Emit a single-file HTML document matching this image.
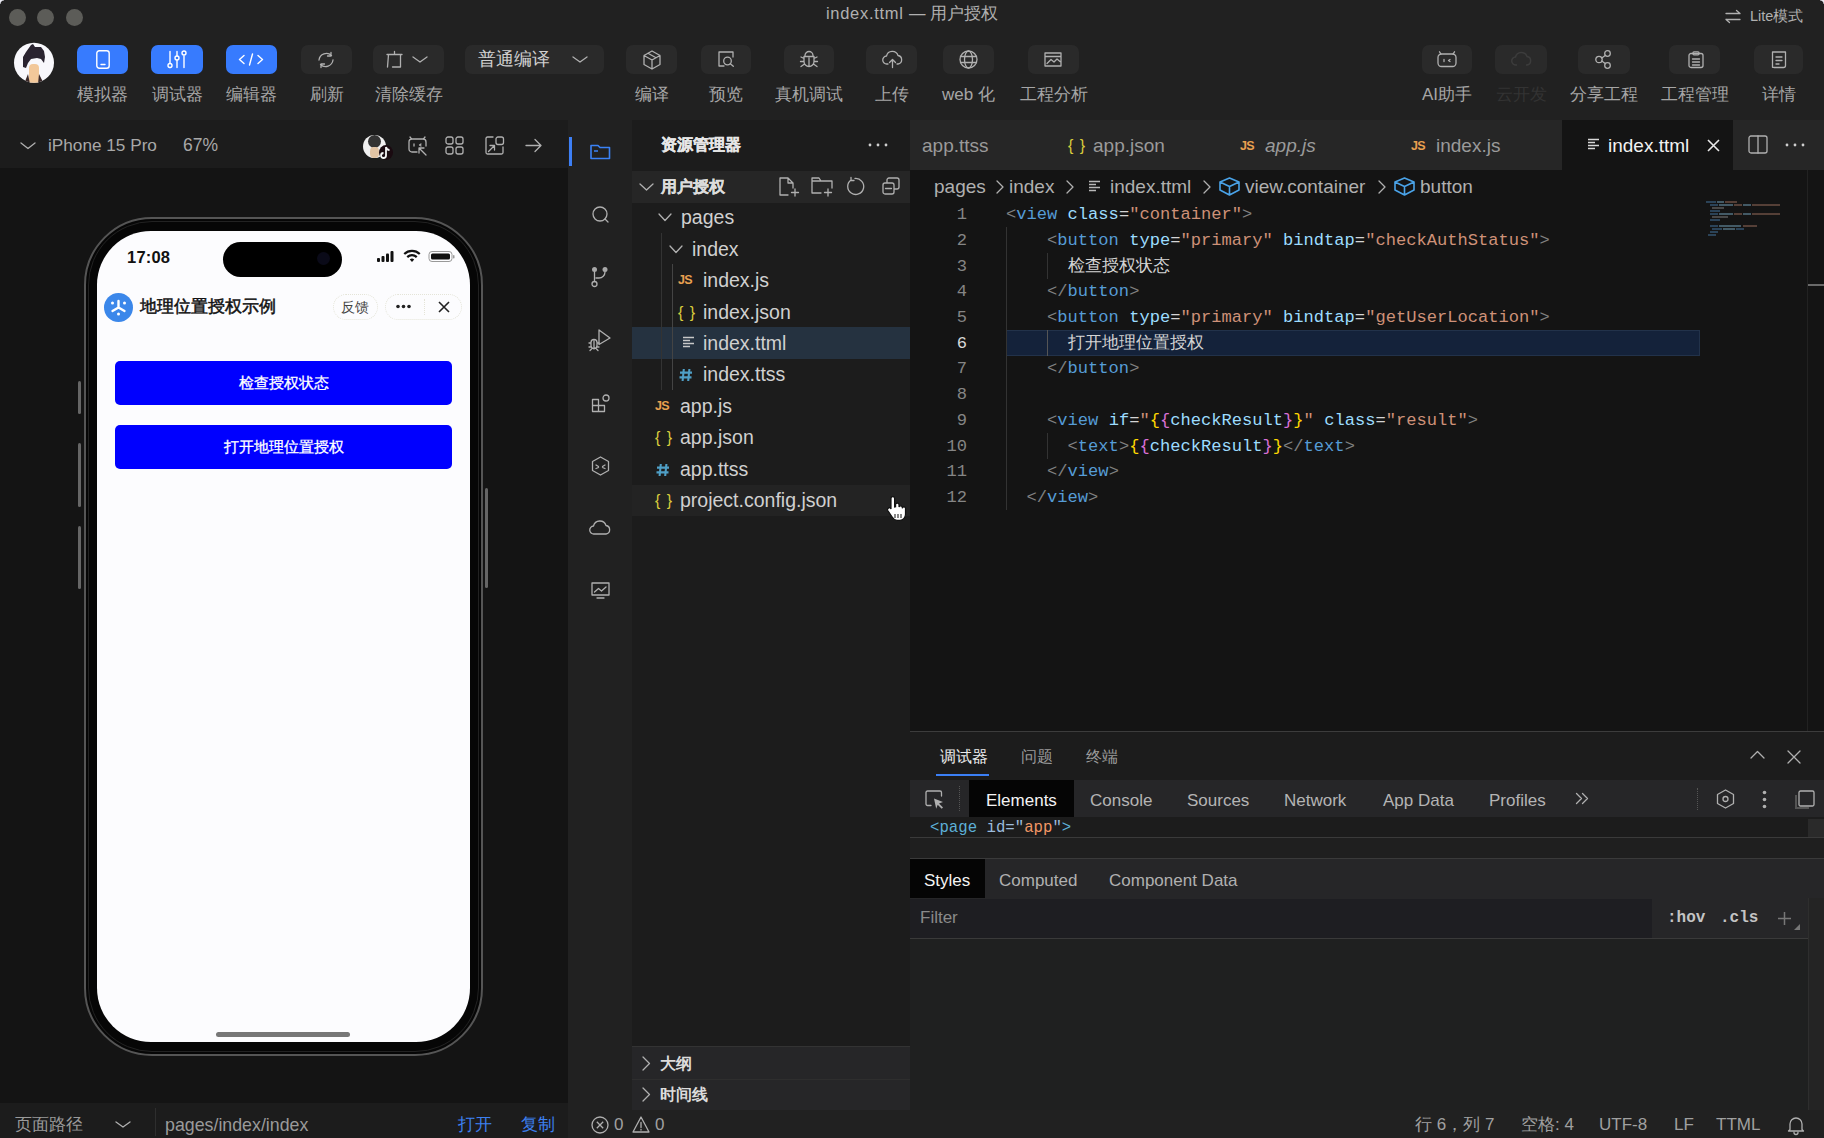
<!DOCTYPE html>
<html><head><meta charset="utf-8">
<style>
*{box-sizing:border-box;margin:0;padding:0}
html,body{width:1824px;height:1138px;overflow:hidden;background:#212121;font-family:"Liberation Sans",sans-serif;color:#c8c8c8}
.a{position:absolute}
svg.i{position:absolute;overflow:visible}
.tb{position:absolute;top:45px;height:29px;border-radius:7px;background:#2a2a2a}
.tbb{background:#377bfe}
.lab{position:absolute;top:84px;font-size:17px;line-height:22px;color:#a6a6a6;white-space:nowrap;text-align:center}
.st{fill:none;stroke:#b0b0b0;stroke-width:1.3;stroke-linecap:round;stroke-linejoin:round}
.sw{fill:none;stroke:#fff;stroke-width:1.4;stroke-linecap:round;stroke-linejoin:round}
.row{position:absolute;height:31.5px;font-size:19.5px;line-height:31.5px;color:#d0d0d0;white-space:nowrap}
.cl{position:absolute;left:1006px;height:26px;line-height:26px;font-size:17.1px;white-space:pre;font-family:"Liberation Mono",monospace;color:#d4d4d4}
.ln{position:absolute;left:910px;width:57px;height:26px;line-height:26px;font-size:17.1px;text-align:right;color:#858585;font-family:"Liberation Mono",monospace}
.g{color:#808080}.t{color:#569cd6}.at{color:#9cdcfe}.s{color:#ce9178}.y{color:#ffd700}.p{color:#da70d6}.w{color:#d4d4d4}
.tab{position:absolute;top:121px;height:50px;line-height:50px;font-size:19px;color:#9a9a9a;white-space:nowrap}
.dt{position:absolute;top:781.5px;height:37px;line-height:37px;font-size:17px;color:#b4b4b4;white-space:nowrap}
.sb{position:absolute;top:1113px;line-height:24px;font-size:17px;color:#a0a0a0;white-space:nowrap}
</style></head><body>

<!-- ===== title bar ===== -->
<div class="a" style="left:9px;top:9px;width:17px;height:17px;border-radius:50%;background:#5c5c58"></div>
<div class="a" style="left:37px;top:9px;width:17px;height:17px;border-radius:50%;background:#5c5c58"></div>
<div class="a" style="left:66px;top:9px;width:17px;height:17px;border-radius:50%;background:#5c5c58"></div>
<div class="a" style="left:826px;top:3px;font-size:16.5px;line-height:20px;color:#b0b0b0;white-space:nowrap"><span style="letter-spacing:0.7px">index.ttml </span>— 用户授权</div>
<svg class="i" style="left:1725px;top:10px" width="16" height="13"><path class="st" d="M1 3.5h14M11.5 0.5l3.5 3M15 9.5H1M4.5 12.5L1 9.5"/></svg>
<div class="a" style="left:1750px;top:7px;font-size:14.5px;line-height:18px;color:#b0b0b0;white-space:nowrap">Lite模式</div>

<!-- ===== toolbar ===== -->
<svg class="i" style="left:0;top:0" width="70" height="90">
 <defs><clipPath id="avc"><circle cx="34" cy="62.7" r="20"/></clipPath></defs>
 <circle cx="34" cy="62.7" r="20" fill="#f8f8fc"/>
 <g clip-path="url(#avc)">
  <path d="M23 67L23 57 26 52 31 45 33 44 35 47 41 47 44 51 45 57 44 63 41 59 37 58 31 59 28 63 26 68z" fill="#2a2430"/>
  <rect x="29" y="64" width="10" height="20" rx="4" fill="#f2c89a"/>
  <path d="M24 84L28 74 30 84zM44 84L39 74 38 84z" fill="#3a2a2a"/>
 </g>
</svg>
<div class="tb tbb" style="left:77px;width:51px"></div>
<div class="tb tbb" style="left:151px;width:52px"></div>
<div class="tb tbb" style="left:226px;width:51px"></div>
<div class="tb" style="left:301px;width:51px"></div>
<div class="tb" style="left:373px;width:71px"></div>
<div class="tb" style="left:465px;width:139px"></div>
<div class="tb" style="left:626px;width:51px"></div>
<div class="tb" style="left:701px;width:50px"></div>
<div class="tb" style="left:784px;width:50px"></div>
<div class="tb" style="left:866px;width:51px"></div>
<div class="tb" style="left:943px;width:51px"></div>
<div class="tb" style="left:1028px;width:51px"></div>
<div class="tb" style="left:1422px;width:50px"></div>
<div class="tb" style="left:1495px;width:52px"></div>
<div class="tb" style="left:1578px;width:52px"></div>
<div class="tb" style="left:1669px;width:51px"></div>
<div class="tb" style="left:1754px;width:49px"></div>

<!-- blue icons -->
<svg class="i" style="left:96px;top:50px" width="14" height="19"><rect class="sw" x="0.8" y="0.8" width="12.4" height="17.4" rx="2.5"/><path class="sw" d="M5 14.5h4"/></svg>
<svg class="i" style="left:166px;top:50px" width="22" height="19"><path class="sw" d="M4 1.5v12M4 17.5v0M11 1.5v4.5M11 10v7.5M18 6v11.5"/><circle class="sw" cx="4" cy="15.5" r="2"/><circle class="sw" cx="11" cy="8" r="2"/><circle class="sw" cx="18" cy="3" r="2"/></svg>
<svg class="i" style="left:238px;top:53px" width="26" height="13"><path class="sw" d="M6 2.5L1.5 6.5 6 10.5M20 2.5l4.5 4-4.5 4M14.5 1l-3 11"/></svg>
<!-- gray icons -->
<svg class="i" style="left:317px;top:51px" width="18" height="18"><path class="st" d="M14.5 4.5A7.5 7.5 0 0 0 2 9M3.5 13.5A7.5 7.5 0 0 0 16 9M14 1.5v3.5h-3.5M4 16.5V13h3.5"/></svg>
<svg class="i" style="left:386px;top:51px" width="17" height="17"><path class="st" d="M8.5 0.5v3M1 3.5h15M2.5 3.5l-1 12.5M14.5 3.5v12.5H6.5"/></svg>
<svg class="i" style="left:412px;top:56px" width="16" height="7"><path class="st" d="M1 1l7 5 7-5"/></svg>
<div class="a" style="left:478px;top:48px;font-size:17.5px;line-height:22px;color:#cfcfcf">普通编译</div>
<svg class="i" style="left:572px;top:56px" width="16" height="7"><path class="st" d="M1 1l7 5 7-5"/></svg>
<svg class="i" style="left:643px;top:50px" width="18" height="20"><path class="st" d="M9 1l8 4.5v9L9 19l-8-4.5v-9zM1 5.5l8 4.5 8-4.5M9 10v9M5 3.2l8 4.5"/></svg>
<svg class="i" style="left:718px;top:51px" width="17" height="16"><path class="st" d="M6 15H1V1h14v5"/><circle class="st" cx="9.5" cy="10" r="3.8"/><path class="st" d="M12.3 12.8l3 2.5"/></svg>
<svg class="i" style="left:800px;top:50px" width="18" height="18"><path class="st" d="M5 5.5a4 4 0 0 1 8 0M4 6.5h10v5a5 5 0 0 1-10 0zM9 8v8M1 7l3 1.5M17 7l-3 1.5M0.5 11.5H4M17.5 11.5H14M1 16.5l3.5-2.5M17 16.5l-3.5-2.5"/></svg>
<svg class="i" style="left:882px;top:51px" width="21" height="17"><path class="st" d="M6 13H5a4 4 0 0 1-.5-8A6 6 0 0 1 16 4.5 4.3 4.3 0 0 1 16 13h-1M10.5 16.5V9M7.5 11.5l3-3 3 3"/></svg>
<svg class="i" style="left:959px;top:50px" width="19" height="19"><circle class="st" cx="9.5" cy="9.5" r="8.5"/><ellipse class="st" cx="9.5" cy="9.5" rx="4" ry="8.5"/><path class="st" d="M1.5 6.5h16M1.5 12.5h16"/></svg>
<svg class="i" style="left:1044px;top:52px" width="18" height="15"><path class="st" d="M1 1h16v13H1zM1 4.5h16M3 11.5l4-4 3 2.5 3-3 3 2.5"/></svg>
<svg class="i" style="left:1437px;top:51px" width="20" height="16"><rect class="st" x="1" y="3" width="18" height="12.5" rx="3.5"/><path class="st" d="M4 3L2.5 0.8M16 3l1.5-2.2M7 8.5v2M13 8.5l-1.5 1 1.5 1"/></svg>
<svg class="i" style="left:1511px;top:51px" width="21" height="17"><path d="M6 14H5a4 4 0 0 1-.5-8A6 6 0 0 1 16 5.5 4.3 4.3 0 0 1 16 14h-1" fill="none" stroke="#3c3c3c" stroke-width="1.5"/></svg>
<svg class="i" style="left:1595px;top:50px" width="17" height="19"><circle class="st" cx="4" cy="9.5" r="3.2"/><circle class="st" cx="12.5" cy="3.5" r="2.8"/><circle class="st" cx="12.5" cy="15.5" r="2.8"/><path class="st" d="M6.8 8l3.4-2.6M6.8 11l3.4 2.6"/></svg>
<svg class="i" style="left:1688px;top:51px" width="16" height="17"><rect class="st" x="1" y="2.5" width="14" height="14" rx="2"/><rect class="st" x="5" y="0.8" width="6" height="3" rx="1"/><path class="st" d="M4.5 8h7M4.5 11h7M4.5 14h7"/></svg>
<svg class="i" style="left:1771px;top:51px" width="16" height="17"><path class="st" d="M3 16.3H1.5V1h13v13.5a2 2 0 0 1-2 2H3zM5 6h6M5 9.5h6M5 13h3"/></svg>

<div class="lab" style="left:77px;width:51px">模拟器</div>
<div class="lab" style="left:151px;width:52px">调试器</div>
<div class="lab" style="left:226px;width:51px">编辑器</div>
<div class="lab" style="left:301px;width:51px">刷新</div>
<div class="lab" style="left:363px;width:91px">清除缓存</div>
<div class="lab" style="left:626px;width:51px">编译</div>
<div class="lab" style="left:701px;width:50px">预览</div>
<div class="lab" style="left:769px;width:80px">真机调试</div>
<div class="lab" style="left:866px;width:51px">上传</div>
<div class="lab" style="left:933px;width:71px">web 化</div>
<div class="lab" style="left:1013px;width:81px">工程分析</div>
<div class="lab" style="left:1407px;width:80px">AI助手</div>
<div class="lab" style="left:1481px;width:80px;color:#333">云开发</div>
<div class="lab" style="left:1564px;width:80px">分享工程</div>
<div class="lab" style="left:1654px;width:81px">工程管理</div>
<div class="lab" style="left:1739px;width:79px">详情</div>

<!-- ===== simulator ===== -->
<div class="a" style="left:0;top:120px;width:568px;height:48px;background:#1c1c1c"></div>
<div class="a" style="left:0;top:168px;width:568px;height:935px;background:#141414"></div>
<svg class="i" style="left:20px;top:142px" width="16" height="8"><path class="st" d="M1 1l7 5.5 7-5.5"/></svg>
<div class="a" style="left:48px;top:135px;font-size:17.2px;line-height:20px;color:#a8a8a8;white-space:nowrap">iPhone 15 Pro</div>
<div class="a" style="left:183px;top:135px;font-size:17.5px;line-height:20px;color:#a8a8a8">67%</div>
<div class="a" style="left:363px;top:135px;width:23px;height:23px;border-radius:50%;background:#f0f0f0;overflow:hidden"><div class="a" style="left:5px;top:0;width:13px;height:13px;border-radius:50%;background:#333"></div><div class="a" style="left:7px;top:12px;width:9px;height:11px;border-radius:40%;background:#e2c4a4"></div></div>
<div class="a" style="left:379px;top:145px;width:14px;height:15px;border-radius:50%;background:#1a0a10"></div>
<svg class="i" style="left:381px;top:146px" width="10" height="13"><path d="M5 1v8.5a2.5 2.5 0 1 1-2.5-2.5M5 1c0.5 2 2 3 3.5 3" fill="none" stroke="#f4f4f4" stroke-width="1.8"/></svg>
<svg class="i" style="left:408px;top:136px" width="20" height="20"><path class="st" d="M9 16H4a3 3 0 0 1-3-3V6a3 3 0 0 1 3-3h11a3 3 0 0 1 3 3v4M3.5 3L2 1M15.5 3L17 1M6 8v2M13 8l-1.5 1 1.5 1M11 12l7 7M11 12v5M11 12h5"/></svg>
<svg class="i" style="left:445px;top:136px" width="19" height="19"><rect class="st" x="1" y="1" width="7" height="7" rx="2"/><rect class="st" x="11" y="1" width="7" height="7" rx="2"/><rect class="st" x="1" y="11" width="7" height="7" rx="2"/><rect class="st" x="11" y="11" width="7" height="7" rx="2"/></svg>
<svg class="i" style="left:485px;top:136px" width="20" height="19"><path class="st" d="M8 1H2.5A1.5 1.5 0 0 0 1 2.5v14A1.5 1.5 0 0 0 2.5 18h14a1.5 1.5 0 0 0 1.5-1.5V11M3.5 15.5l6-6M5 9.5h4.5V14"/><rect class="st" x="11" y="1" width="7.5" height="7.5" rx="2"/></svg>
<svg class="i" style="left:525px;top:138px" width="17" height="15"><path class="st" d="M1 7.5h15M10 1.5l6 6-6 6"/></svg>

<!-- phone -->
<div class="a" style="left:84px;top:217px;width:399px;height:839px;border-radius:68px;background:#060606;border:2px solid #555"></div>
<div class="a" style="left:88px;top:221px;width:391px;height:831px;border-radius:64px;border:1px solid #222"></div>
<div class="a" style="left:78px;top:381px;width:3px;height:33px;border-radius:2px;background:#666"></div>
<div class="a" style="left:78px;top:443px;width:3px;height:64px;border-radius:2px;background:#666"></div>
<div class="a" style="left:78px;top:526px;width:3px;height:63px;border-radius:2px;background:#666"></div>
<div class="a" style="left:485px;top:488px;width:3px;height:100px;border-radius:2px;background:#666"></div>
<div class="a" style="left:97px;top:231px;width:373px;height:811px;border-radius:54px;background:#fcfcfe"></div>
<div class="a" style="left:223px;top:242px;width:119px;height:35px;border-radius:18px;background:#000"></div>
<div class="a" style="left:317px;top:252px;width:13px;height:13px;border-radius:50%;background:#0a0a18"></div>
<div class="a" style="left:127px;top:247px;font-size:16.5px;font-weight:bold;line-height:20px;color:#111;letter-spacing:0.2px">17:08</div>
<svg class="i" style="left:377px;top:250px" width="80" height="14">
 <rect x="0" y="8" width="3" height="4" rx="1" fill="#111"/><rect x="4.5" y="6" width="3" height="6" rx="1" fill="#111"/><rect x="9" y="3.5" width="3" height="8.5" rx="1" fill="#111"/><rect x="13.5" y="1" width="3" height="11" rx="1" fill="#111"/>
 <path d="M35 12l-2.2-2.6a3.4 3.4 0 0 1 4.4 0z M29.5 6.3a8 8 0 0 1 11 0l-1.5 1.7a5.7 5.7 0 0 0-8 0z M26.5 3.2a12.5 12.5 0 0 1 17 0l-1.5 1.6a10.2 10.2 0 0 0-14 0z" fill="#111"/>
 <rect x="52" y="1.5" width="23" height="10" rx="3" fill="none" stroke="#999" stroke-width="1"/><rect x="54" y="3.5" width="19" height="6" rx="1.5" fill="#111"/><rect x="76" y="5" width="1.5" height="3.5" rx="0.7" fill="#999"/>
</svg>
<div class="a" style="left:104px;top:293px;width:29px;height:29px;border-radius:50%;background:#3b87ea"></div>
<svg class="i" style="left:104px;top:293px" width="29" height="29"><path d="M14.5 8v6.5M14.5 14.5l-6 3.5M14.5 14.5l6 3.5" stroke="#fff" stroke-width="2.4" stroke-linecap="round" fill="none"/><circle cx="14.5" cy="21" r="1.5" fill="#fff"/><circle cx="8.5" cy="10" r="1.5" fill="#fff"/><circle cx="20.5" cy="10" r="1.5" fill="#fff"/></svg>
<div class="a" style="left:140px;top:296px;font-size:17px;line-height:22px;color:#111;-webkit-text-stroke:0.5px #111">地理位置授权示例</div>
<div class="a" style="left:333px;top:294px;width:45px;height:26px;border-radius:13px;border:1px dotted #e4e4d8"></div>
<div class="a" style="left:341px;top:297px;font-size:14px;line-height:20px;color:#444">反馈</div>
<div class="a" style="left:385px;top:294px;width:77px;height:26px;border-radius:13px;border:1px dotted #e4e4d8"></div>
<div class="a" style="left:424px;top:299px;width:1px;height:16px;border-left:1px dotted #e4e4d8"></div>
<svg class="i" style="left:396px;top:304px" width="15" height="5"><circle cx="2" cy="2.5" r="1.8" fill="#222"/><circle cx="7.5" cy="2.5" r="1.8" fill="#222"/><circle cx="13" cy="2.5" r="1.8" fill="#222"/></svg>
<svg class="i" style="left:438px;top:301px" width="12" height="12"><path d="M1 1l10 10M11 1L1 11" stroke="#222" stroke-width="1.6" fill="none"/></svg>
<div class="a" style="left:115px;top:361px;width:337px;height:44px;border-radius:5px;background:#0000ff;color:#fff;font-size:15.2px;line-height:44px;text-align:center;-webkit-text-stroke:0.3px #fff">检查授权状态</div>
<div class="a" style="left:115px;top:425px;width:337px;height:44px;border-radius:5px;background:#0000ff;color:#fff;font-size:15.2px;line-height:44px;text-align:center;-webkit-text-stroke:0.3px #fff">打开地理位置授权</div>
<div class="a" style="left:216px;top:1032px;width:134px;height:5px;border-radius:3px;background:#777"></div>

<!-- sim footer -->
<div class="a" style="left:0;top:1103px;width:568px;height:35px;background:#1c1c1c"></div>
<div class="a" style="left:15px;top:1113.5px;font-size:17px;line-height:22px;color:#9a9a9a">页面路径</div>
<svg class="i" style="left:115px;top:1121px" width="16" height="7"><path class="st" d="M1 1l7 5 7-5"/></svg>
<div class="a" style="left:155px;top:1108px;width:1px;height:28px;background:#2e2e2e"></div>
<div class="a" style="left:165px;top:1113.5px;font-size:17.8px;line-height:22px;color:#9a9a9a">pages/index/index</div>
<div class="a" style="left:458px;top:1113.5px;font-size:17px;line-height:22px;color:#3d80f0">打开</div>
<div class="a" style="left:521px;top:1113.5px;font-size:17px;line-height:22px;color:#3d80f0">复制</div>

<!-- ===== activity bar ===== -->
<div class="a" style="left:569px;top:137px;width:3px;height:29px;background:#3d7ff5"></div>
<svg class="i" style="left:590px;top:144px" width="21" height="16"><path d="M1 14.5V1.5h7l2 2h9.5v11z M4 7h4" fill="none" stroke="#3b82f6" stroke-width="1.6" stroke-linejoin="round"/></svg>
<svg class="i" style="left:592px;top:206px" width="17" height="17"><circle class="st" cx="8" cy="8" r="7"/><path class="st" d="M13 13l3 3"/></svg>
<svg class="i" style="left:591px;top:266px" width="18" height="22"><circle cx="3.5" cy="3.5" r="2.5" fill="#a8a8a8"/><circle cx="14" cy="3.5" r="2.5" fill="#a8a8a8"/><circle class="st" cx="3.5" cy="18" r="2.5"/><path class="st" d="M3.5 6v9.5M14 6a6 6 0 0 1-6 6H5"/></svg>
<svg class="i" style="left:588px;top:329px" width="24" height="24"><path class="st" d="M11 1l11 8-11 6.5z"/><path class="st" d="M3 13.5a3 3 0 0 1 6 0v3a3 3 0 0 1-6 0zM6 12v8M1 14h2M9 14h2M1 18h2M9 18h2M2 21.5l1.5-1.5M10 21.5L8.5 20"/></svg>
<svg class="i" style="left:591px;top:394px" width="20" height="20"><path class="st" d="M1.5 5.5h6v6h-6zM1.5 11.5h6v6h-6zM7.5 11.5h6v6h-6z"/><circle class="st" cx="15" cy="4" r="3"/></svg>
<svg class="i" style="left:591px;top:456px" width="19" height="20"><path class="st" d="M9.5 1l8 4.5v9l-8 4.5-8-4.5v-9zM5 9l2.5 1.5M14 9l-2.5 1.5M5 12.5l2.5-1M14 12.5l-2.5-1"/></svg>
<svg class="i" style="left:589px;top:520px" width="22" height="15"><path class="st" d="M6 14H5a4 4 0 0 1-.5-8A6.5 6.5 0 0 1 17 5.5 4.3 4.3 0 0 1 17 14z"/></svg>
<svg class="i" style="left:591px;top:582px" width="19" height="17"><path class="st" d="M1 1h17v12H1zM6 16h7M3.5 10l4-3.5 3 2.5 4.5-4"/></svg>

<!-- ===== explorer ===== -->
<div class="a" style="left:632px;top:120px;width:278px;height:990px;background:#1c1c1c"></div>
<div class="a" style="left:661px;top:135px;font-size:15.5px;line-height:20px;color:#e6e6e6;font-weight:bold;-webkit-text-stroke:0.3px #e6e6e6">资源管理器</div>
<svg class="i" style="left:868px;top:143px" width="20" height="4"><circle cx="2" cy="2" r="1.4" fill="#cfcfcf"/><circle cx="10" cy="2" r="1.4" fill="#cfcfcf"/><circle cx="18" cy="2" r="1.4" fill="#cfcfcf"/></svg>
<div class="a" style="left:632px;top:171px;width:278px;height:32px;background:#262626"></div>
<svg class="i" style="left:639px;top:183px" width="15" height="8"><path class="st" d="M1 1l6.5 6 6.5-6"/></svg>
<div class="a" style="left:661px;top:176px;font-size:15.5px;line-height:22px;color:#dcdcdc;font-weight:bold;-webkit-text-stroke:0.3px #dcdcdc">用户授权</div>
<svg class="i" style="left:779px;top:177px" width="21" height="20"><path class="st" d="M9 18H1V1h8l5 5v5M9 1v5h5M16 12v7M12.5 15.5h7"/></svg>
<svg class="i" style="left:811px;top:177px" width="23" height="20"><path class="st" d="M10 16H1V1h7l2 3h11v7M1 4h9M17 12v7M13.5 15.5h7"/></svg>
<svg class="i" style="left:847px;top:177px" width="19" height="18"><path class="st" d="M4 3a8 8 0 1 0 4-1.5M4 0.5v3h3"/></svg>
<svg class="i" style="left:882px;top:177px" width="18" height="18"><rect class="st" x="5" y="1" width="12" height="11" rx="2"/><rect class="st" x="1" y="6" width="11" height="11" rx="2" style="fill:#262626"/><path class="st" d="M3.5 11.5h6"/></svg>

<!-- tree -->
<div class="a" style="left:632px;top:327px;width:278px;height:32px;background:#253240"></div>
<div class="a" style="left:632px;top:485px;width:278px;height:31px;background:#232323"></div>
<div class="a" style="left:661px;top:233px;width:1px;height:157px;background:#333"></div>
<div class="a" style="left:672px;top:264px;width:1px;height:126px;background:#444"></div>
<svg class="i" style="left:658px;top:213px" width="14" height="9"><path class="st" d="M1 1l6 6.5 6-6.5"/></svg>
<div class="row" style="left:681px;top:202px">pages</div>
<svg class="i" style="left:669px;top:245px" width="14" height="9"><path class="st" d="M1 1l6 6.5 6-6.5"/></svg>
<div class="row" style="left:692px;top:233.5px">index</div>
<div class="row" style="left:678px;top:265px;font-size:12.5px;font-weight:bold;color:#e8a050;letter-spacing:-0.8px">JS</div>
<div class="row" style="left:703px;top:265px">index.js</div>
<div class="row" style="left:678px;top:296.5px;font-size:16px;color:#d8cc3c;letter-spacing:1px">{ }</div>
<div class="row" style="left:703px;top:296.5px">index.json</div>
<svg class="i" style="left:682px;top:336px" width="14" height="13"><path d="M1 1.5h11M1 4.5h7M1 7.5h11M1 10.5h7" stroke="#c8c8c8" stroke-width="1.6" fill="none"/></svg>
<div class="row" style="left:703px;top:327.5px">index.ttml</div>
<svg class="i" style="left:679px;top:368px" width="14" height="14"><path d="M4.8 1L3.6 13M10.4 1L9.2 13M1 4.6h12M0.5 9.4h12" stroke="#4f9fc6" stroke-width="2.1" fill="none"/></svg>
<div class="row" style="left:703px;top:359px">index.ttss</div>
<div class="row" style="left:655px;top:390.5px;font-size:12.5px;font-weight:bold;color:#e8a050;letter-spacing:-0.8px">JS</div>
<div class="row" style="left:680px;top:390.5px">app.js</div>
<div class="row" style="left:655px;top:422px;font-size:16px;color:#d8cc3c;letter-spacing:1px">{ }</div>
<div class="row" style="left:680px;top:422px">app.json</div>
<svg class="i" style="left:656px;top:463px" width="14" height="14"><path d="M4.8 1L3.6 13M10.4 1L9.2 13M1 4.6h12M0.5 9.4h12" stroke="#4f9fc6" stroke-width="2.1" fill="none"/></svg>
<div class="row" style="left:680px;top:453.5px">app.ttss</div>
<div class="row" style="left:655px;top:485px;font-size:16px;color:#d8cc3c;letter-spacing:1px">{ }</div>
<div class="row" style="left:680px;top:485px">project.config.json</div>
<!-- hand cursor -->
<svg class="i" style="left:886px;top:496px" width="22" height="26"><path d="M5 2.5a1.8 1.8 0 0 1 3.6 0V11l1-.3V8.8a1.7 1.7 0 0 1 3.4 0v2.2a1.7 1.7 0 0 1 3.3.3v1a1.6 1.6 0 0 1 3.2.5v5.5c0 3-2.2 6-5.5 6H11c-2.5 0-3.8-1.5-5-3.5L1.8 14.5a1.8 1.8 0 0 1 2.9-2.1L5 13z" fill="#fff" stroke="#111" stroke-width="1.2"/><path d="M9 18v4M12 18v4M15 18v4" stroke="#111" stroke-width="1"/></svg>

<!-- outline / timeline -->
<div class="a" style="left:632px;top:1046px;width:278px;height:64px;background:#262628"></div>
<div class="a" style="left:632px;top:1046px;width:278px;height:1px;background:#333"></div>
<div class="a" style="left:632px;top:1079px;width:278px;height:1px;background:#2e2e2e"></div>
<svg class="i" style="left:642px;top:1056px" width="9" height="15"><path class="st" d="M1 1l6.5 6.5L1 14"/></svg>
<div class="a" style="left:660px;top:1053px;font-size:15.5px;line-height:22px;color:#dcdcdc;font-weight:bold">大纲</div>
<svg class="i" style="left:642px;top:1087px" width="9" height="15"><path class="st" d="M1 1l6.5 6.5L1 14"/></svg>
<div class="a" style="left:660px;top:1084px;font-size:15.5px;line-height:22px;color:#dcdcdc;font-weight:bold">时间线</div>

<!-- ===== editor ===== -->
<div class="a" style="left:910px;top:120px;width:914px;height:50px;background:#262626"></div>
<div class="a" style="left:910px;top:170px;width:914px;height:561px;background:#141414"></div>
<div class="a" style="left:1562px;top:120px;width:171px;height:50px;background:#141414"></div>
<div class="tab" style="left:922px">app.ttss</div>
<div class="tab" style="left:1068px;font-size:16px;color:#d8cc3c;letter-spacing:1px">{ }</div>
<div class="tab" style="left:1093px">app.json</div>
<div class="tab" style="left:1240px;font-size:12.5px;font-weight:bold;color:#e8a050;letter-spacing:-0.8px">JS</div>
<div class="tab" style="left:1265px;font-style:italic">app.js</div>
<div class="tab" style="left:1411px;font-size:12.5px;font-weight:bold;color:#e8a050;letter-spacing:-0.8px">JS</div>
<div class="tab" style="left:1436px">index.js</div>
<svg class="i" style="left:1587px;top:138px" width="14" height="13"><path d="M1 1.5h11M1 4.5h7M1 7.5h11M1 10.5h7" stroke="#d8d8d8" stroke-width="1.6" fill="none"/></svg>
<div class="tab" style="left:1608px;color:#f2f2f2">index.ttml</div>
<svg class="i" style="left:1707px;top:139px" width="13" height="13"><path d="M1 1l11 11M12 1L1 12" stroke="#e8e8e8" stroke-width="1.6" fill="none"/></svg>
<svg class="i" style="left:1748px;top:135px" width="20" height="19"><rect class="st" x="1" y="1" width="18" height="17" rx="2"/><path class="st" d="M10 1v17"/></svg>
<svg class="i" style="left:1785px;top:143px" width="20" height="4"><circle cx="2" cy="2" r="1.4" fill="#cfcfcf"/><circle cx="10" cy="2" r="1.4" fill="#cfcfcf"/><circle cx="18" cy="2" r="1.4" fill="#cfcfcf"/></svg>

<!-- breadcrumbs -->
<div class="a" style="left:934px;top:175px;font-size:19px;line-height:24px;color:#b0b0b0;white-space:nowrap">pages</div>
<svg class="i" style="left:996px;top:180px" width="8" height="14"><path class="st" d="M1 1l6 6-6 6"/></svg>
<div class="a" style="left:1009px;top:175px;font-size:19px;line-height:24px;color:#b0b0b0">index</div>
<svg class="i" style="left:1066px;top:180px" width="8" height="14"><path class="st" d="M1 1l6 6-6 6"/></svg>
<svg class="i" style="left:1088px;top:180px" width="14" height="13"><path d="M1 1.5h11M1 4.5h7M1 7.5h11M1 10.5h7" stroke="#b8b8b8" stroke-width="1.6" fill="none"/></svg>
<div class="a" style="left:1110px;top:175px;font-size:19px;line-height:24px;color:#b0b0b0">index.ttml</div>
<svg class="i" style="left:1203px;top:180px" width="8" height="14"><path class="st" d="M1 1l6 6-6 6"/></svg>
<svg class="i" style="left:1219px;top:177px" width="21" height="19"><path d="M10.5 1L20 5v8l-9.5 5L1 13V5zM1 5l9.5 4.5L20 5M10.5 9.5V18" fill="none" stroke="#4aa3e8" stroke-width="1.6" stroke-linejoin="round"/></svg>
<div class="a" style="left:1245px;top:175px;font-size:19px;line-height:24px;color:#b0b0b0;white-space:nowrap">view.container</div>
<svg class="i" style="left:1378px;top:180px" width="8" height="14"><path class="st" d="M1 1l6 6-6 6"/></svg>
<svg class="i" style="left:1394px;top:177px" width="21" height="19"><path d="M10.5 1L20 5v8l-9.5 5L1 13V5zM1 5l9.5 4.5L20 5M10.5 9.5V18" fill="none" stroke="#4aa3e8" stroke-width="1.6" stroke-linejoin="round"/></svg>
<div class="a" style="left:1420px;top:175px;font-size:19px;line-height:24px;color:#b0b0b0">button</div>

<!-- code -->
<div class="a" style="left:1006px;top:330px;width:694px;height:26px;background:#14223a;border:1px solid #22324a"></div>
<div class="a" style="left:1006px;top:227px;width:1px;height:283px;background:#333"></div>
<div class="a" style="left:1047px;top:253px;width:1px;height:26px;background:#333"></div>
<div class="a" style="left:1047px;top:330px;width:1px;height:26px;background:#555"></div>
<div class="a" style="left:1047px;top:433px;width:1px;height:26px;background:#333"></div>

<div class="ln" style="top:202px">1</div>
<div class="ln" style="top:228px">2</div>
<div class="ln" style="top:254px">3</div>
<div class="ln" style="top:279px">4</div>
<div class="ln" style="top:305px">5</div>
<div class="ln" style="top:331px;color:#d8d8d8">6</div>
<div class="ln" style="top:356px">7</div>
<div class="ln" style="top:382px">8</div>
<div class="ln" style="top:408px">9</div>
<div class="ln" style="top:434px">10</div>
<div class="ln" style="top:459px">11</div>
<div class="ln" style="top:485px">12</div>

<div class="cl" style="top:202px"><span class="g">&lt;</span><span class="t">view</span> <span class="at">class</span><span class="w">=</span><span class="s">"container"</span><span class="g">&gt;</span></div>
<div class="cl" style="top:228px">    <span class="g">&lt;</span><span class="t">button</span> <span class="at">type</span><span class="w">=</span><span class="s">"primary"</span> <span class="at">bindtap</span><span class="w">=</span><span class="s">"checkAuthStatus"</span><span class="g">&gt;</span></div>
<div class="cl" style="top:254px">      检查授权状态</div>
<div class="cl" style="top:279px">    <span class="g">&lt;/</span><span class="t">button</span><span class="g">&gt;</span></div>
<div class="cl" style="top:305px">    <span class="g">&lt;</span><span class="t">button</span> <span class="at">type</span><span class="w">=</span><span class="s">"primary"</span> <span class="at">bindtap</span><span class="w">=</span><span class="s">"getUserLocation"</span><span class="g">&gt;</span></div>
<div class="cl" style="top:331px">      打开地理位置授权</div>
<div class="cl" style="top:356px">    <span class="g">&lt;/</span><span class="t">button</span><span class="g">&gt;</span></div>
<div class="cl" style="top:408px">    <span class="g">&lt;</span><span class="t">view</span> <span class="at">if</span><span class="w">=</span><span class="s">"</span><span class="y">{</span><span class="p">{</span><span class="at">checkResult</span><span class="p">}</span><span class="y">}</span><span class="s">"</span> <span class="at">class</span><span class="w">=</span><span class="s">"result"</span><span class="g">&gt;</span></div>
<div class="cl" style="top:434px">      <span class="g">&lt;</span><span class="t">text</span><span class="g">&gt;</span><span class="y">{</span><span class="p">{</span><span class="at">checkResult</span><span class="p">}</span><span class="y">}</span><span class="g">&lt;/</span><span class="t">text</span><span class="g">&gt;</span></div>
<div class="cl" style="top:459px">    <span class="g">&lt;/</span><span class="t">view</span><span class="g">&gt;</span></div>
<div class="cl" style="top:485px">  <span class="g">&lt;/</span><span class="t">view</span><span class="g">&gt;</span></div>

<!-- minimap -->
<svg class="i" style="left:1705px;top:201px;opacity:0.7" width="80" height="36">
 <g stroke-width="1">
 <path d="M1 1h10" stroke="#569cd6"/><path d="M12 1h7" stroke="#9cdcfe"/><path d="M20 1h12" stroke="#ce9178"/>
 <path d="M5 4h8" stroke="#569cd6"/><path d="M14 4h14" stroke="#9cdcfe"/><path d="M29 4h8" stroke="#ce9178"/><path d="M38 4h8" stroke="#9cdcfe"/><path d="M47 4h28" stroke="#ce9178"/>
 <path d="M7 7h12" stroke="#aaa"/>
 <path d="M5 10h10" stroke="#569cd6"/>
 <path d="M5 13h8" stroke="#569cd6"/><path d="M14 13h14" stroke="#9cdcfe"/><path d="M29 13h8" stroke="#ce9178"/><path d="M38 13h8" stroke="#9cdcfe"/><path d="M47 13h28" stroke="#ce9178"/>
 <path d="M7 16h16" stroke="#aaa"/>
 <path d="M5 19h10" stroke="#569cd6"/>
 <path d="M5 25h8" stroke="#569cd6"/><path d="M14 25h22" stroke="#9cdcfe"/><path d="M38 25h14" stroke="#ce9178"/>
 <path d="M7 28h10" stroke="#569cd6"/><path d="M18 28h12" stroke="#9cdcfe"/><path d="M31 28h8" stroke="#569cd6"/>
 <path d="M5 31h8" stroke="#569cd6"/>
 <path d="M3 34h8" stroke="#569cd6"/>
 </g>
</svg>
<div class="a" style="left:1807px;top:170px;width:1px;height:561px;background:#222"></div>
<div class="a" style="left:1808px;top:284px;width:16px;height:2px;background:#6a6a6a"></div>

<!-- ===== panel ===== -->
<div class="a" style="left:910px;top:731px;width:914px;height:379px;background:#1c1c1c"></div>
<div class="a" style="left:910px;top:938px;width:914px;height:172px;background:#1f2020"></div>
<div class="a" style="left:910px;top:731px;width:914px;height:1px;background:#3c3c3c"></div>
<div class="a" style="left:940px;top:746px;font-size:16px;line-height:22px;color:#ececec">调试器</div>
<div class="a" style="left:936px;top:774px;width:53px;height:2px;background:#3b7ff5"></div>
<div class="a" style="left:1021px;top:746px;font-size:16px;line-height:22px;color:#9a9a9a">问题</div>
<div class="a" style="left:1086px;top:746px;font-size:16px;line-height:22px;color:#9a9a9a">终端</div>
<svg class="i" style="left:1750px;top:750px" width="15" height="9"><path class="st" d="M1 8l6.5-6.5L14 8"/></svg>
<svg class="i" style="left:1787px;top:750px" width="14" height="14"><path class="st" d="M1 1l12 12M13 1L1 13"/></svg>

<!-- devtools -->
<div class="a" style="left:910px;top:780px;width:914px;height:37px;background:#262628"></div>
<div class="a" style="left:969px;top:780px;width:105px;height:37px;background:#050505"></div>
<svg class="i" style="left:925px;top:790px" width="20" height="19"><path class="st" d="M6 15.5H2.5a1.5 1.5 0 0 1-1.5-1.5V2.5A1.5 1.5 0 0 1 2.5 1H15a1.5 1.5 0 0 1 1.5 1.5V6"/><path d="M9 8.5l9 3.5-4 1.5 4 4-1.3 1.3-4-4-1.5 4z" fill="#b0b0b0"/></svg>
<div class="a" style="left:959px;top:786px;width:1px;height:25px;border-left:1px dotted #555"></div>
<div class="dt" style="left:986px;color:#f4f4f4">Elements</div>
<div class="dt" style="left:1090px">Console</div>
<div class="dt" style="left:1187px">Sources</div>
<div class="dt" style="left:1284px">Network</div>
<div class="dt" style="left:1383px">App Data</div>
<div class="dt" style="left:1489px">Profiles</div>
<svg class="i" style="left:1575px;top:792px" width="14" height="13"><path class="st" d="M1.5 1.5l5 5-5 5M7.5 1.5l5 5-5 5"/></svg>
<div class="a" style="left:1697px;top:788px;width:1px;height:22px;border-left:1px dotted #555"></div>
<svg class="i" style="left:1716px;top:789px" width="19" height="20"><path class="st" d="M9.5 1l8 4.5v9l-8 4.5-8-4.5v-9z"/><circle class="st" cx="9.5" cy="10" r="2.5"/></svg>
<svg class="i" style="left:1762px;top:790px" width="5" height="19"><circle cx="2.5" cy="2.5" r="1.8" fill="#b0b0b0"/><circle cx="2.5" cy="9.5" r="1.8" fill="#b0b0b0"/><circle cx="2.5" cy="16.5" r="1.8" fill="#b0b0b0"/></svg>
<svg class="i" style="left:1795px;top:790px" width="21" height="20"><rect class="st" x="4" y="1" width="15" height="15" rx="1.5"/><path d="M1 5v13h13" stroke="#555" stroke-width="2" fill="none"/></svg>

<div class="a" style="left:910px;top:817px;width:914px;height:21px;background:#1c1c1c"></div>
<div class="a" style="left:930px;top:818px;font-size:15.7px;line-height:20px;font-family:'Liberation Mono',monospace;white-space:pre"><span style="color:#5db0d7">&lt;page</span> <span style="color:#9bbbdc">id</span><span style="color:#9bbbdc">="</span><span style="color:#f29766">app</span><span style="color:#9bbbdc">"</span><span style="color:#5db0d7">&gt;</span></div>
<div class="a" style="left:1808px;top:819px;width:16px;height:18px;background:#2a2a2a"></div>
<div class="a" style="left:910px;top:837px;width:914px;height:1px;background:#3a3a3a"></div>
<div class="a" style="left:910px;top:838px;width:914px;height:20px;background:#1f1f1f"></div>
<div class="a" style="left:910px;top:858px;width:914px;height:1px;background:#3a3a3a"></div>
<div class="a" style="left:910px;top:859px;width:914px;height:39px;background:#262628"></div>
<div class="a" style="left:910px;top:859px;width:75px;height:39px;background:#050505"></div>
<div class="a" style="left:924px;top:869.5px;font-size:17px;line-height:22px;color:#f4f4f4">Styles</div>
<div class="a" style="left:999px;top:869.5px;font-size:17px;line-height:22px;color:#b0b0b0">Computed</div>
<div class="a" style="left:1109px;top:869.5px;font-size:17px;line-height:22px;color:#b0b0b0;white-space:nowrap">Component Data</div>
<div class="a" style="left:910px;top:898px;width:898px;height:40px;background:#262628"></div>
<div class="a" style="left:910px;top:899px;width:742px;height:39px;background:#1e1e22"></div>
<div class="a" style="left:920px;top:907px;font-size:17px;line-height:22px;color:#8a8a8a">Filter</div>
<div class="a" style="left:1667px;top:907px;font-size:16px;line-height:22px;color:#c4c4c4;font-family:'Liberation Mono',monospace;font-weight:bold">:hov</div>
<div class="a" style="left:1720px;top:907px;font-size:16px;line-height:22px;color:#c4c4c4;font-family:'Liberation Mono',monospace;font-weight:bold">.cls</div>
<svg class="i" style="left:1777px;top:911px" width="15" height="15"><path d="M7.5 1v13M1 7.5h13" stroke="#777" stroke-width="1.5"/></svg>
<svg class="i" style="left:1794px;top:924px" width="6" height="6"><path d="M6 0v6H0z" fill="#777"/></svg>
<div class="a" style="left:910px;top:938px;width:898px;height:1px;background:#3a3a3a"></div>
<div class="a" style="left:1808px;top:898px;width:16px;height:212px;background:#242424;border-left:1px solid #2e2e2e"></div>

<!-- status bar -->
<svg class="i" style="left:591px;top:1116px" width="18" height="18"><circle class="st" cx="9" cy="9" r="8"/><path d="M5.8 5.8l6.4 6.4M12.2 5.8l-6.4 6.4" stroke="#b0b0b0" stroke-width="1.3" fill="none"/></svg>
<div class="sb" style="left:614px">0</div>
<svg class="i" style="left:632px;top:1116px" width="18" height="17"><path class="st" d="M9 1l8 15H1z M9 6.5v5M9 13.5v0.5"/></svg>
<div class="sb" style="left:655px">0</div>
<div class="sb" style="left:1415px">行 6，列 7</div>
<div class="sb" style="left:1521px">空格: 4</div>
<div class="sb" style="left:1599px">UTF-8</div>
<div class="sb" style="left:1674px">LF</div>
<div class="sb" style="left:1716px">TTML</div>
<svg class="i" style="left:1788px;top:1116px" width="16" height="18"><path class="st" d="M2 13.5V8a6 6 0 0 1 12 0v5.5l1.5 1.5h-15zM6 16.5a2 2 0 0 0 4 0"/></svg>

<div class="a" style="left:0;top:0;width:4px;height:4px;background:radial-gradient(circle at 4px 4px,transparent 3px,#e8e8f0 4px)"></div>
<div class="a" style="left:1820px;top:0;width:4px;height:4px;background:radial-gradient(circle at 0 4px,transparent 3px,#e8e8f0 4px)"></div>
</body></html>
